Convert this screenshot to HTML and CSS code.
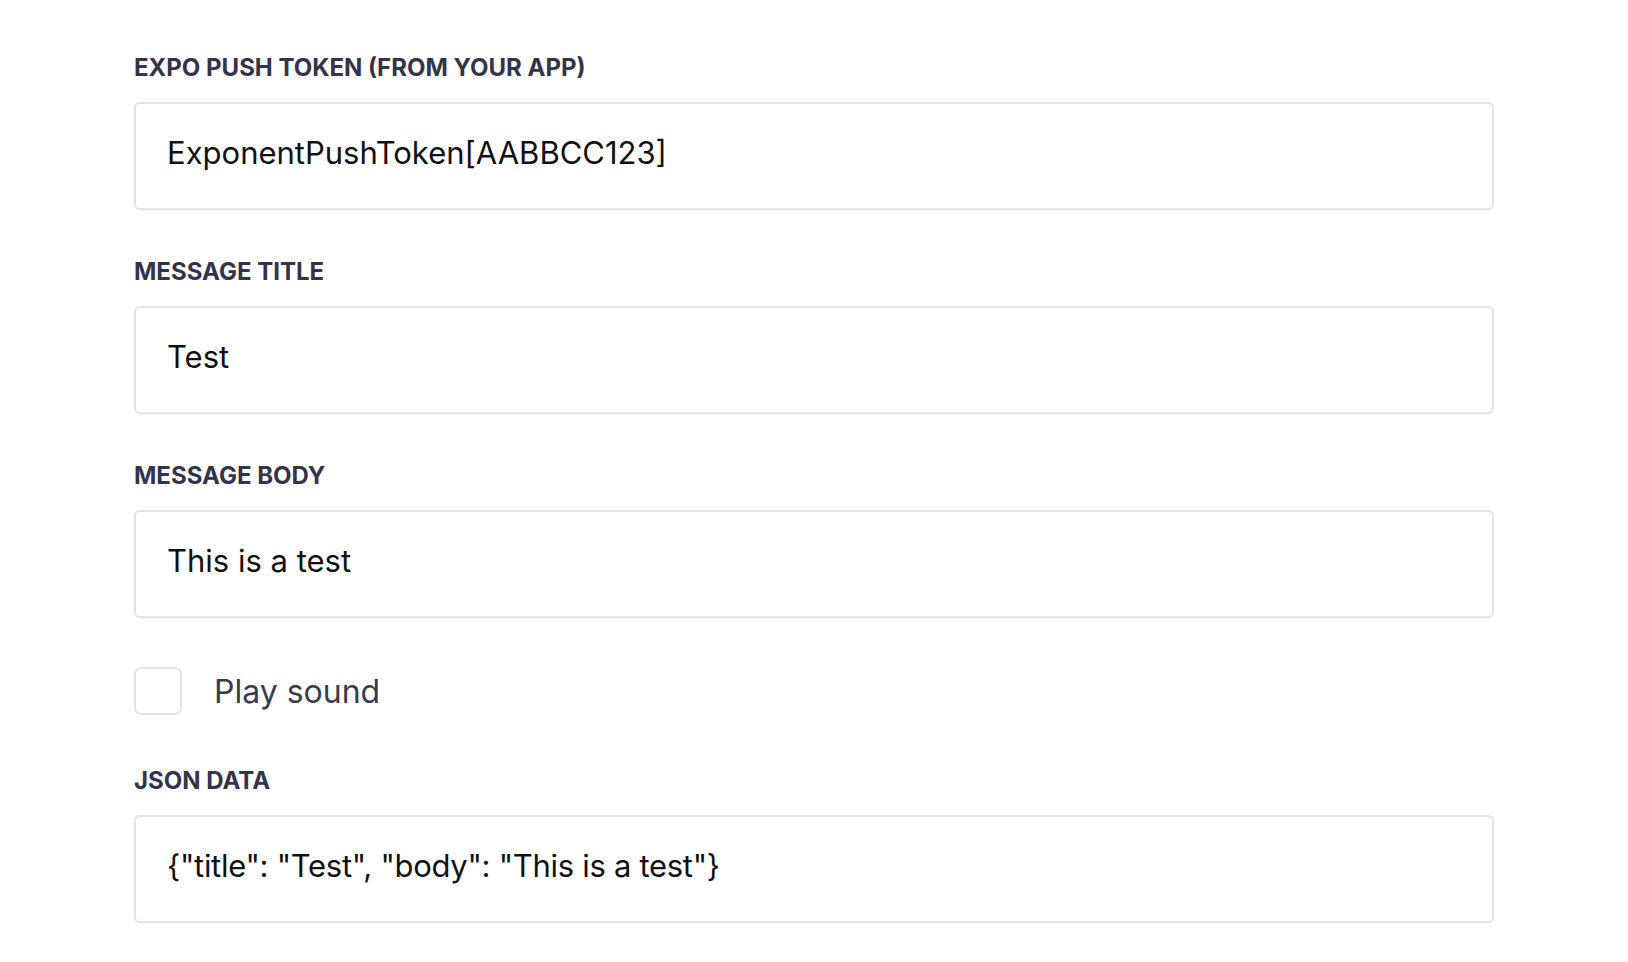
FILE: index.html
```html
<!DOCTYPE html>
<html>
<head>
<meta charset="utf-8">
<link rel="stylesheet" href="styles.css">
</head>
<body>
<form class="form">
  <div class="field">
    <label class="label">Expo push token (from your app)</label>
    <div class="input">ExponentPushToken[AABBCC123]</div>
  </div>
  <div class="field">
    <label class="label">Message title</label>
    <div class="input">Test</div>
  </div>
  <div class="field">
    <label class="label">Message body</label>
    <div class="input">This is a test</div>
  </div>
  <div class="check-row">
    <span class="checkbox"></span>
    <span class="check-label">Play sound</span>
  </div>
  <div class="field">
    <label class="label">JSON data</label>
    <div class="input input-json">{"title": "Test", "body": "This is a test"}</div>
  </div>
</form>
</body>
</html>
```
FILE: styles.css
```css
html, body {
  margin: 0;
  padding: 0;
  background: #ffffff;
}
body {
  font-family: Inter, "Noto Sans", sans-serif;
}
.form {
  display: flex;
  flex-direction: column;
  padding: 55px 134px 0 134px;
  width: 1360px;
}
.field {
  display: flex;
  flex-direction: column;
  gap: 21px;
  margin-bottom: 49px;
}
.label {
  font-size: 24px;
  line-height: 26px;
  font-weight: 700;
  text-transform: uppercase;
  color: #33344a;
  letter-spacing: 0;
}
.input {
  box-sizing: border-box;
  height: 108px;
  border: 2px solid #e4e4e6;
  border-radius: 6px;
  padding: 0 31px 7px 31px;
  display: flex;
  align-items: center;
  font-size: 31px;
  color: #111111;
  box-shadow: 0 1px 2px rgba(0,0,0,0.04);
}
.input-json {
  letter-spacing: -0.3px;
}
.check-row {
  display: flex;
  align-items: center;
  gap: 32px;
  margin-bottom: 53px;
}
.checkbox {
  box-sizing: border-box;
  width: 48px;
  height: 48px;
  border: 2px solid #e4e4e6;
  border-radius: 7px;
}
.check-label {
  font-size: 32px;
  color: #3a3b52;
}
```
